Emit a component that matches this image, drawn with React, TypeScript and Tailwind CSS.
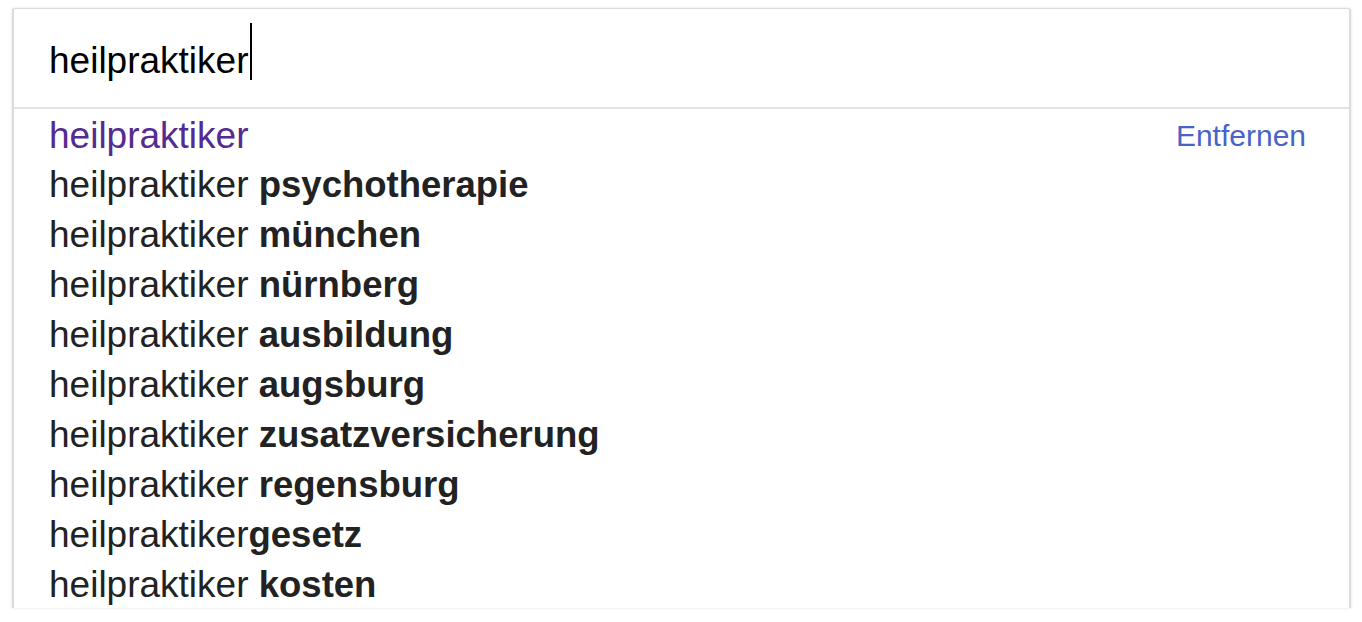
import React from "react";

const rows: { base: string; bold: string }[] = [
  { base: "heilpraktiker ", bold: "psychotherapie" },
  { base: "heilpraktiker ", bold: "münchen" },
  { base: "heilpraktiker ", bold: "nürnberg" },
  { base: "heilpraktiker ", bold: "ausbildung" },
  { base: "heilpraktiker ", bold: "augsburg" },
  { base: "heilpraktiker ", bold: "zusatzversicherung" },
  { base: "heilpraktiker ", bold: "regensburg" },
  { base: "heilpraktiker", bold: "gesetz" },
  { base: "heilpraktiker ", bold: "kosten" },
];

export default function App() {
  return (
    <div
      className="w-[1362px] h-[622px] bg-white pt-[8px] pl-[12px] overflow-hidden"
      style={{ fontFamily: '"Liberation Sans", Arial, sans-serif' }}
    >
      <div className="w-[1339px] h-[600px] bg-white border-t border-l-2 border-r-2 border-[#dcdcdc] rounded-t-[3px] shadow-[0_0_3px_rgba(0,0,0,0.12)] overflow-hidden">
        <div className="h-[100px] flex items-center pl-[35px] border-b-2 border-[#e2e2e2]">
          <span className="text-[37px] leading-none text-black pt-[4px]">heilpraktiker</span>
          <span className="self-start w-[2px] h-[57px] bg-black ml-[2px] mt-[14px]" />
        </div>
        <div className="pl-[35px] pr-[43px] pt-[1px]">
          <div className="h-[50px] flex items-center justify-between">
            <span className="text-[37px] leading-none text-[#552a91]">heilpraktiker</span>
            <span className="text-[30px] leading-none text-[#4a63c6] pt-[2px]">Entfernen</span>
          </div>
          {rows.map((r, i) => (
            <div key={i} className="h-[50px] flex items-center">
              <span className="text-[37px] leading-none text-[#222222] whitespace-pre">
                {r.base}
                <b className="font-bold text-[36.5px]">{r.bold}</b>
              </span>
            </div>
          ))}
        </div>
      </div>
    </div>
  );
}
